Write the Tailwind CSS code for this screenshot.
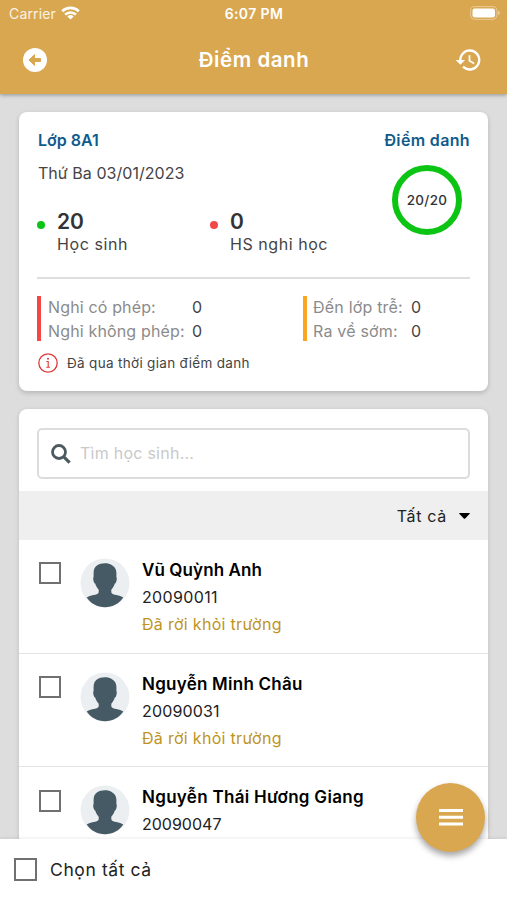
<!DOCTYPE html>
<html lang="vi">
<head>
<meta charset="utf-8">
<meta name="viewport" content="width=device-width, initial-scale=1">
<title>Điểm danh</title>
<script src="https://cdn.jsdelivr.net/npm/@tailwindcss/browser@4"></script>
</head>
<body class="h-[900px] w-[507px] overflow-hidden bg-[#dddddd] font-['Inter','Noto_Sans',sans-serif] text-[#333]">
<svg class="hidden">
  <symbol id="person" viewBox="0 0 50 50">
    <circle cx="25" cy="25" r="24.5" fill="#eceff1"/>
    <path fill="#455a64" d="M25 5.300C18.500 5.300 13.800 8 13.600 14.500V19C12.900 19.500 13.200 22.500 14 24.200C14.400 25.300 14.900 25.500 15.200 25.600C15.900 28 17 30 18.700 31.700V34.500C17.500 37.500 10 36.800 6.700 39.600C10.500 45.500 17.500 49.300 25 49.300S39.500 45.500 43.300 39.600C40 36.800 32.500 37.500 31.300 34.500V31.700C33 30 34.100 28 34.800 25.600C35.100 25.500 35.600 25.300 36 24.200C36.800 22.500 37.100 19.500 36.400 19V14.500C36.200 11 34.500 8.500 32 7.300C30 5.800 27.800 5.300 25 5.300Z"/>
  </symbol>
</svg>
<div class="flex h-full flex-col">
  <header class="z-10 h-[94px] shrink-0 bg-[#d9a750] text-white shadow-[0_1px_4px_rgba(0,0,0,0.35)]">
    <div class="grid h-[27px] grid-cols-3 items-center pl-[9px] pr-[6px]">
      <div class="flex items-center gap-[5px]">
        <span class="text-[14px] tracking-[0.150px] text-white/85">Carrier</span>
        <svg class="-mt-px h-[14px] w-[19px]" viewBox="0 0 19 14" fill="none" stroke="#fff" stroke-width="2.600"><path d="M1.200 5.200a12 12 0 0 1 16.600 0M4.100 8.600a7.800 7.800 0 0 1 10.800 0"/><path d="M9.500 13.600 6.400 10.500a4.500 4.500 0 0 1 6.200 0z" fill="#fff" stroke="none"/></svg>
      </div>
      <div class="-ml-[2px] text-center text-[14px] font-semibold tracking-[0.4px]">6:07 PM</div>
      <svg class="-mt-px h-[14px] w-[31px] justify-self-end" viewBox="0 0 31 14"><rect x=".6" y=".6" width="26.300" height="12.800" rx="4" fill="none" stroke="#fff" stroke-opacity=".4"/><rect x="2.500" y="2.500" width="22.500" height="9" rx="2.200" fill="#fff"/><path d="M28.200 4.800c2 .6 2 3.800 0 4.400z" fill="#fff" fill-opacity=".5"/></svg>
    </div>
    <div class="flex h-[66px] items-center justify-between pl-[23px] pr-[26px]">
      <svg class="size-6" viewBox="0 0 24 24"><circle cx="12" cy="12" r="12" fill="#fff"/><path fill="#d9a750" stroke="#d9a750" stroke-linejoin="round" d="M6 12l5.500-5.300v3.800H17.500v3H11.500v3.800z"/></svg>
      <h1 class="pt-px pl-[6px] text-[20.500px] font-semibold tracking-[0.550px]">Điểm danh</h1>
      <svg class="h-[26px] w-[26px]" viewBox="0.500 1.500 22 21" fill="#fff"><path d="M13 3a9 9 0 0 0-9 9H1l3.890 3.890.070.140L9 12H6a7 7 0 1 1 2.060 4.940l-1.420 1.420A9 9 0 1 0 13 3zm-1 5v5l4.280 2.540.720-1.210-3.500-2.080V8z"/></svg>
    </div>
  </header>

  <main class="flex min-h-0 flex-1 flex-col gap-[18px] overflow-hidden px-[19px] pt-[18px]">
    <section class="h-[279px] shrink-0 rounded-lg bg-white px-[18px] shadow-[0_2px_5px_rgba(0,0,0,0.18)]">
      <div class="flex items-start justify-between pt-[15px]">
        <div class="pl-[1px] leading-[26px]">
          <div class="text-[16px] font-semibold text-[#105b8c]">Lớp 8A1</div>
          <div class="mt-[7px] text-[16px] tracking-[0.04px] text-[#444]">Thứ Ba 03/01/2023</div>
        </div>
        <div class="flex flex-col items-end">
          <div class="text-[16px] leading-[26px] font-semibold tracking-[0.35px] text-[#105b8c]">Điểm danh</div>
          <div class="mt-[12px] mr-[8px] -mb-[30px] flex size-[70px] items-center justify-center rounded-full border-[6px] border-[#0bc414] text-[13.500px] font-medium tracking-[0.3px]">20/20</div>
        </div>
      </div>
      <div class="mt-[5px] flex h-[50px]">
        <div class="flex w-[173px] gap-[12px]"><i class="mt-[11px] size-2 rounded-full bg-[#0bc414]"></i><div><div class="text-[21px] leading-[24px] font-semibold">20</div><div class="text-[16px] leading-[20px] tracking-[0.6px] text-[#444]">Học sinh</div></div></div>
        <div class="flex gap-[12px]"><i class="mt-[11px] size-2 rounded-full bg-[#f14848]"></i><div><div class="text-[21px] leading-[24px] font-semibold">0</div><div class="text-[16px] leading-[20px] tracking-[0.55px] text-[#444]">HS nghỉ học</div></div></div>
      </div>
      <div class="mt-[17px] h-[2px] bg-[#dfdfdf]"></div>
      <div class="mt-[17px] flex h-[45px] items-center text-[16px] leading-[24px] text-[#444]">
        <div class="flex h-full w-[266px] items-center border-l-4 border-[#f64747] pl-[7px]">
          <div class="w-[144px] tracking-[0.150px] whitespace-nowrap text-[#8b8b8b]">Nghỉ có phép:<br>Nghỉ không phép:</div><div>0<br>0</div>
        </div>
        <div class="flex h-full items-center border-l-4 border-[#fba522] pl-[6px]">
          <div class="w-[98px] tracking-[0.2px] whitespace-nowrap text-[#8b8b8b]">Đến lớp trễ:<br>Ra về sớm:</div><div>0<br>0</div>
        </div>
      </div>
      <div class="mt-[12px] flex h-5 items-center gap-[10px] pl-px">
        <svg class="size-5" viewBox="0 0 20 20" fill="none" stroke="#df3a3a" stroke-width="1.300"><circle cx="10" cy="10" r="9.200"/><path d="M8.400 8.500h1.800v5.500M8.300 14.200h3.600" stroke-width="1.100"/><circle cx="10" cy="5.800" r="1" fill="#df3a3a" stroke="none"/></svg>
        <span class="-ml-px text-[13.500px] tracking-[0.32px] text-[#444]">Đã qua thời gian điểm danh</span>
      </div>
    </section>

    <section class="h-[460px] shrink-0 overflow-hidden rounded-t-lg bg-white shadow-[0_1px_4px_rgba(0,0,0,0.15)]">
      <div class="px-[18px] pt-[19px] pb-[12px]">
        <div class="flex h-[51px] items-center gap-[9px] rounded-[5px] border-2 border-[#dcdcdc] pl-[12px]">
          <svg class="size-5" viewBox="0 0 20 20" fill="none" stroke="#4c5b60"><circle cx="8" cy="8" r="6.500" stroke-width="2.800"/><path d="m12.800 12.800 5.800 5.800" stroke-width="3.200"/></svg>
          <span class="-mt-px text-[16px] tracking-[0.25px] text-[#c9c9c9]">Tìm học sinh...</span>
        </div>
      </div>
      <div class="flex h-[49px] items-center justify-end gap-[12px] bg-[#efefef] pr-[18px]">
        <span class="text-[16px] tracking-[0.7px] text-[#222]">Tất cả</span>
        <svg class="h-[6px] w-[11px]" viewBox="0 0 11 6"><path d="M.5 0h10q.5.300.200.700L6.200 5.600q-.7.500-1.400 0L.3.700Q0 .3.500 0z"/></svg>
      </div>
      <div class="leading-[27px] text-[#222]">
        <div class="flex h-[113.500px] border-b-[1.500px] border-[#e4e4e4] pt-[16px] pl-[20px]">
          <div class="mt-[6px] size-[22px] border-2 border-[#707070]"></div>
          <svg class="mt-[2px] ml-[19px] size-[50px]"><use href="#person"/></svg>
          <div class="mt-px ml-[12px]"><div class="text-[17px] font-semibold tracking-[0.100px] text-black">Vũ Quỳnh Anh</div><div class="text-[16px] tracking-[0.35px]">20090011</div><div class="text-[16px] tracking-[0.3px] text-[#bd941f]">Đã rời khỏi trường</div></div>
        </div>
        <div class="flex h-[113.500px] border-b-[1.500px] border-[#e4e4e4] pt-[16px] pl-[20px]">
          <div class="mt-[6px] size-[22px] border-2 border-[#707070]"></div>
          <svg class="mt-[2px] ml-[19px] size-[50px]"><use href="#person"/></svg>
          <div class="mt-px ml-[12px]"><div class="text-[17px] font-semibold tracking-[0.25px] text-black">Nguyễn Minh Châu</div><div class="text-[16px] tracking-[0.15px]">20090031</div><div class="text-[16px] tracking-[0.3px] text-[#bd941f]">Đã rời khỏi trường</div></div>
        </div>
        <div class="flex h-[113.500px] pt-[16px] pl-[20px]">
          <div class="mt-[7px] size-[22px] border-2 border-[#707070]"></div>
          <svg class="mt-[2px] ml-[19px] size-[50px]"><use href="#person"/></svg>
          <div class="mt-px ml-[12px]"><div class="text-[17px] font-semibold tracking-[0.3px] text-black">Nguyễn Thái Hương Giang</div><div class="text-[16px]">20090047</div></div>
        </div>
      </div>
    </section>
  </main>

  <footer class="relative z-10 flex h-[61px] shrink-0 items-center gap-[13px] bg-white pl-[14px] shadow-[0_-1px_3px_rgba(0,0,0,0.08)]">
    <div class="size-[23px] border-2 border-[#707070]"></div>
    <span class="pt-[2px] text-[17.500px] tracking-[0.6px] text-[#222]">Chọn tất cả</span>
    <button class="absolute -top-[56px] left-[416px] flex size-[69px] items-center justify-center rounded-full bg-[#d9a750] shadow-[0_4px_6px_rgba(0,0,0,0.35)]">
      <svg class="-mt-px h-[17px] w-[24px]" viewBox="0 0 24 17" fill="#fff"><path d="M0 0h24v3H0zM0 6.800h24v3H0zM0 13.600h24v3H0z"/></svg>
    </button>
  </footer>
</div>
</body>
</html>
